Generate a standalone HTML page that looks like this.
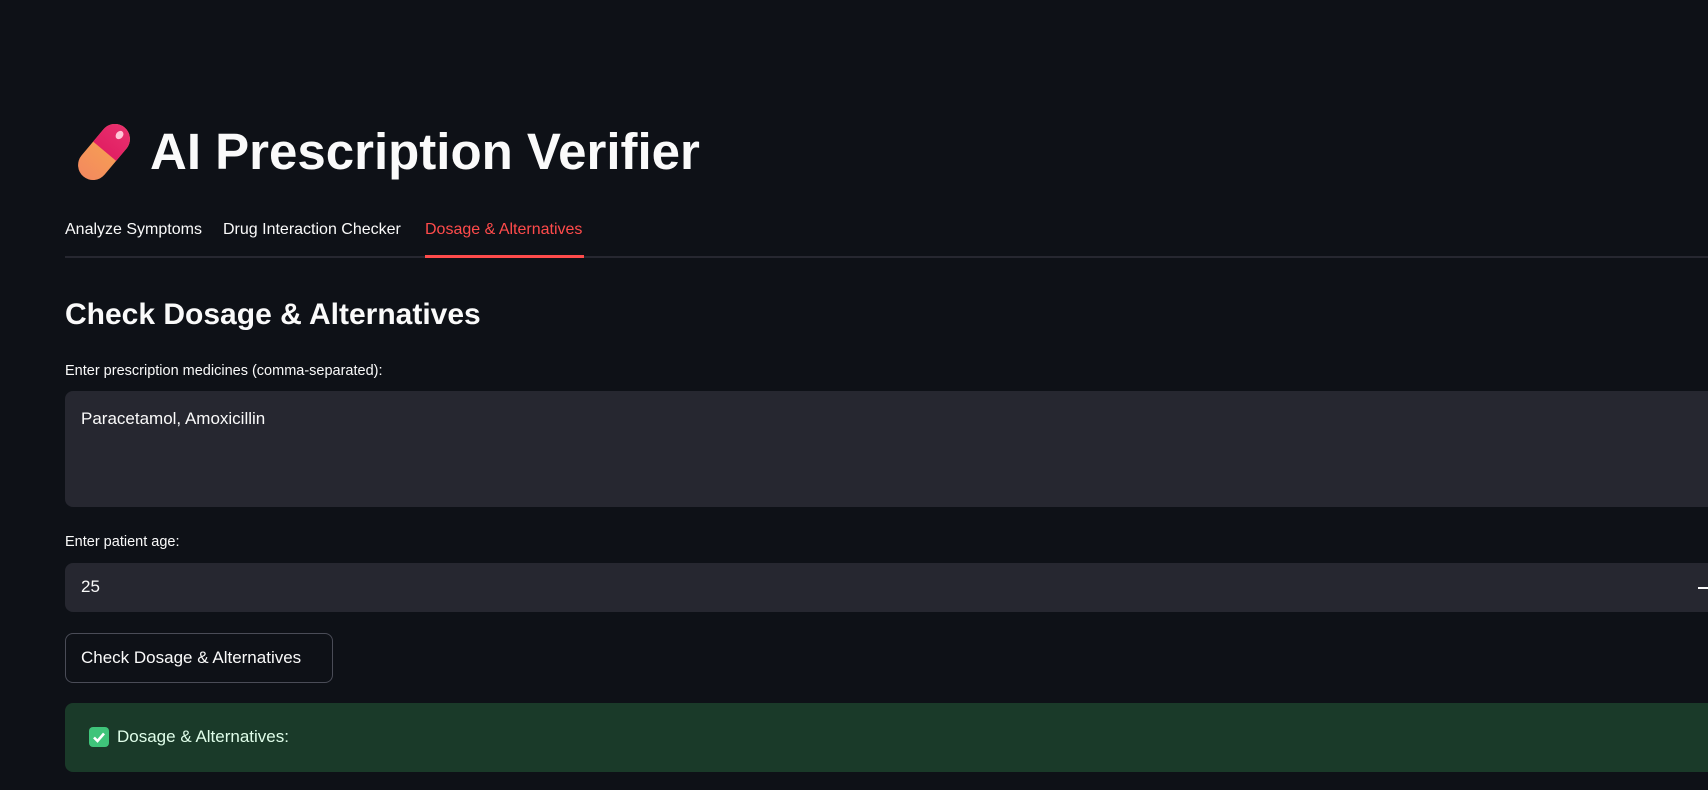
<!DOCTYPE html>
<html><head><meta charset="utf-8"><style>
*{margin:0;padding:0;box-sizing:border-box}
body{width:1708px;height:790px;background:#0e1117;color:#fafafa;font-family:"Liberation Sans",sans-serif;position:relative;overflow:hidden}
.a{position:absolute;white-space:nowrap}
</style></head><body>
<svg class="a" style="left:70px;top:118px" width="68" height="68" viewBox="0 0 68 68">
<defs><linearGradient id="o" x1="0" y1="0" x2="0" y2="1"><stop offset="0" stop-color="#f7a94e"/><stop offset="1" stop-color="#f48a5e"/></linearGradient>
<linearGradient id="p" x1="0" y1="0" x2="0" y2="1"><stop offset="0" stop-color="#e8306e"/><stop offset="1" stop-color="#e11f63"/></linearGradient></defs>
<g transform="rotate(40 34 34)">
<rect x="19" y="2" width="30" height="64" rx="15" fill="url(#o)"/>
<path d="M19 33V17a15 15 0 0 1 30 0v16z" fill="url(#p)"/>
<ellipse cx="35" cy="11" rx="3.5" ry="4.5" fill="#ffc7d8"/>
</g></svg>
<div class="a" style="left:150px;top:121px;font-size:51px;font-weight:bold;line-height:62px">AI Prescription Verifier</div>
<div class="a" style="left:65px;top:221px;font-size:16px">Analyze Symptoms</div>
<div class="a" style="left:223px;top:221px;font-size:16px">Drug Interaction Checker</div>
<div class="a" style="left:425px;top:221px;font-size:16px;color:#ff4b4b">Dosage &amp; Alternatives</div>
<div class="a" style="left:65px;top:256px;width:1643px;height:2px;background:#262730"></div>
<div class="a" style="left:425px;top:255px;width:159px;height:3px;background:#ff4b4b"></div>
<div class="a" style="left:65px;top:296px;font-size:30px;font-weight:bold;line-height:38px">Check Dosage &amp; Alternatives</div>
<div class="a" style="left:65px;top:363px;font-size:14.5px">Enter prescription medicines (comma-separated):</div>
<div class="a" style="left:65px;top:391px;width:1660px;height:116px;background:#262730;border-radius:8px"></div>
<div class="a" style="left:81px;top:409px;font-size:17px">Paracetamol, Amoxicillin</div>
<div class="a" style="left:65px;top:534px;font-size:14.5px">Enter patient age:</div>
<div class="a" style="left:65px;top:563px;width:1660px;height:49px;background:#262730;border-radius:8px"></div>
<div class="a" style="left:81px;top:577px;font-size:17px">25</div>
<div class="a" style="left:1698px;top:587px;width:10px;height:2px;background:#fafafa"></div>
<div class="a" style="left:65px;top:633px;width:268px;height:50px;border:1px solid #4a4c57;border-radius:8px"></div>
<div class="a" style="left:81px;top:648px;font-size:17px">Check Dosage &amp; Alternatives</div>
<div class="a" style="left:65px;top:703px;width:1660px;height:69px;background:#1a3a29;border-radius:8px"></div>
<div class="a" style="left:89px;top:727px;width:20px;height:20px;background:#3fc47a;border-radius:4px"></div>
<svg class="a" style="left:89px;top:727px" width="20" height="20" viewBox="0 0 20 20"><path d="M5 10.5l3.5 3.5L15 6.5" stroke="#fff" stroke-width="2.6" fill="none"/></svg>
<div class="a" style="left:117px;top:727px;font-size:17px;color:#dffde9">Dosage &amp; Alternatives:</div>
</body></html>
